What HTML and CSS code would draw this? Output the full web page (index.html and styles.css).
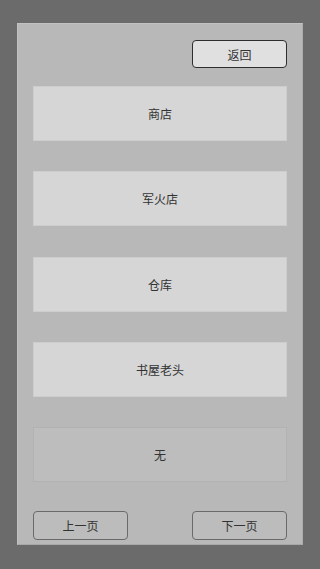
FILE: index.html
```html
<!DOCTYPE html>
<html lang="zh">
<head>
<meta charset="utf-8">
<link rel="stylesheet" href="styles.css">
</head>
<body>
<div class="panel">
  <div class="top">
    <div class="btn back">返回</div>
  </div>
  <div class="list">
    <div class="item">商店</div>
    <div class="item">军火店</div>
    <div class="item">仓库</div>
    <div class="item">书屋老头</div>
    <div class="item empty">无</div>
  </div>
  <div class="pager">
    <div class="btn page">上一页</div>
    <div class="btn page">下一页</div>
  </div>
</div>
</body>
</html>
```
FILE: styles.css
```css
html, body {
  margin: 0;
  padding: 0;
  background: #6b6b6b;
  width: 320px;
  height: 569px;
  overflow: hidden;
  font-family: "Noto Sans CJK SC", "Noto Sans", sans-serif;
  color: #333;
}
.panel {
  box-sizing: border-box;
  margin: 23px 0 0 17px;
  width: 286px;
  height: 522px;
  background: #b8b8b8;
  border-top: 1px solid #c2c2c2;
  border-left: 1px solid #c2c2c2;
  border-right: 1px solid #ababab;
  border-bottom: 1px solid #a8a8a8;
  padding: 16px 15px 0 15px;
  display: flex;
  flex-direction: column;
}
.top {
  display: flex;
  justify-content: flex-end;
}
.btn {
  box-sizing: border-box;
  width: 95px;
  height: 29px;
  border-radius: 4px;
  display: flex;
  align-items: center;
  justify-content: center;
  font-size: 12px;
}
.back {
  height: 28px;
  background: #e0e0e0;
  border: 1px solid #2e2e2e;
}
.list {
  margin-top: 18px;
  display: flex;
  flex-direction: column;
  gap: 30.25px;
}
.item {
  box-sizing: border-box;
  height: 55px;
  background: #d6d6d6;
  border: 1px solid #cdcdcd;
  display: flex;
  align-items: center;
  justify-content: center;
  font-size: 12px;
}
.item.empty {
  background: #bdbdbd;
  border-color: #b2b2b2;
}
.pager {
  margin-top: 29px;
  display: flex;
  justify-content: space-between;
}
.page {
  background: #bcbcbc;
  border: 1px solid #6a6a6a;
}
```
